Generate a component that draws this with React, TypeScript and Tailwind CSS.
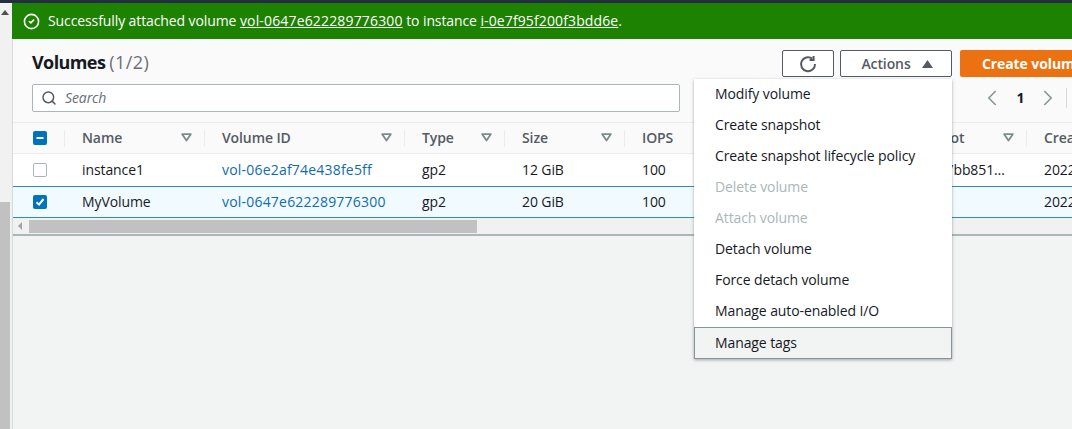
import { Search, CircleCheck, ChevronLeft, ChevronRight } from "lucide-react";

const cols = "grid grid-cols-[52px_140px_200px_100px_120px_100px_160px_142px_200px] w-[1214px]";

function Sort() {
  return (
    <svg width="11" height="9" viewBox="0 0 11 9" className="shrink-0 -mt-[2px]">
      <path d="M1.2 1.2h8.6L5.5 7.6z" fill="none" stroke="#7d8b8c" strokeWidth="1.8" strokeLinejoin="round" />
    </svg>
  );
}

function Head({ label, last }: { label: string; last?: boolean }) {
  return (
    <div className="flex items-center justify-between pl-[17px] pr-[13px] relative h-full">
      <span className="font-semibold text-[#545b64]">{label}</span>
      {!last && <Sort />}
      {!last && <span className="absolute right-0 top-[7px] h-[17px] w-px bg-[#eaeded]" />}
    </div>
  );
}

function Box({ kind }: { kind: "none" | "dash" | "check" }) {
  if (kind === "none") return <span className="block w-[14px] h-[14px] rounded-[2px] border border-[#aab7b8] bg-white" />;
  return (
    <span className="flex items-center justify-center w-[14px] h-[14px] rounded-[2px] bg-[#0073bb]">
      <svg width="10" height="10" viewBox="0 0 10 10">
        {kind === "dash" ? (
          <path d="M1.5 5h7" stroke="#fff" strokeWidth="2" fill="none" />
        ) : (
          <path d="M1.5 5.2 4 7.6 8.5 2" stroke="#fff" strokeWidth="2" fill="none" />
        )}
      </svg>
    </span>
  );
}

function Cell({ children, link }: { children?: React.ReactNode; link?: boolean }) {
  return (
    <div className={`pl-[17px] pr-[8px] whitespace-nowrap overflow-hidden ${link ? "text-[#0f6cad] tracking-[0.2px]" : "text-[#16191f]"}`}>{children}</div>
  );
}

const menu: [string, boolean?][] = [
  ["Modify volume"],
  ["Create snapshot"],
  ["Create snapshot lifecycle policy"],
  ["Delete volume", true],
  ["Attach volume", true],
  ["Detach volume"],
  ["Force detach volume"],
  ["Manage auto-enabled I/O"],
];

export default function App() {
  return (
    <div className="relative w-[1072px] h-[429px] overflow-hidden bg-[#f2f3f3] text-[14px] leading-5 tracking-[-0.1px] font-['Open_Sans','Noto_Sans',sans-serif]">
      <div className="h-[3px] bg-[#232f3e]" />
      <div className="flex h-[426px]">
        <div className="w-3 shrink-0 flex flex-col bg-[#f1f1f1]">
          <div className="h-[199px] pt-[7px] pl-[1px]">
            <svg width="8" height="5" viewBox="0 0 8 5"><path d="M0 5 4 0l4 5z" fill="#505050" /></svg>
          </div>
          <div className="flex-1 w-[10px] bg-[#c1c1c1]" />
        </div>
        <div className="flex-1 min-w-0 flex flex-col">
          <div className="h-[36px] shrink-0 bg-[#1d8102] text-white flex items-center pl-[11px] pr-4 gap-[8px] whitespace-nowrap">
            <CircleCheck size={17} strokeWidth={2.25} />
            <span>
              Successfully attached volume <u className="tracking-[0.16px]">vol-0647e622289776300</u> to instance <u className="tracking-[0.12px]">i-0e7f95f200f3bdd6e</u>.
            </span>
          </div>
          <div className="border-l border-[#d5dbdb] flex-1 flex flex-col overflow-hidden">
            <div className="bg-[#fafafa] pl-[19px] h-[83px] shrink-0">
              <div className="flex pt-[11px]">
                <div className="flex-1 text-[18px] leading-6 font-bold tracking-[-0.6px] text-[#16191f]">
                  Volumes <span className="font-normal tracking-[0.4px] text-[#687078]">(1/2)</span>
                </div>
                <div className="w-[290px] shrink-0 flex overflow-hidden">
                  <div className="w-[52px] h-[27px] shrink-0 border border-[#545b64] rounded-[2px] bg-white flex items-center justify-center">
                    <svg width="18" height="18" viewBox="0 0 18 18" fill="none" stroke="#545b64" strokeWidth="2">
                      <path d="M13.2 3.6A7 7 0 1 0 16 9" />
                      <path d="M14.6 1v4h-4" />
                    </svg>
                  </div>
                  <div className="ml-[6px] w-[112px] h-[27px] shrink-0 border border-[#545b64] rounded-[2px] bg-white flex items-center justify-center gap-[11px] pl-[2px] font-semibold text-[#545b64]">
                    Actions
                    <svg width="11" height="8" viewBox="0 0 11 8"><path d="M0 8 5.5 0 11 8z" fill="#545b64" /></svg>
                  </div>
                  <div className="ml-2 w-[130px] h-[27px] shrink-0 rounded-[2px] bg-[#ec7211] text-white font-bold pl-[22px] flex items-center whitespace-nowrap">
                    Create volume
                  </div>
                </div>
              </div>
              <div className="flex mt-[7px] items-center">
                <div className="w-[648px] h-[28px] shrink-0 border border-[#aab7b8] rounded-[2px] bg-white flex items-center pl-[8px] gap-[8px] text-[#687078] italic">
                  <Search size={16} strokeWidth={2.25} color="#545b64" />
                  Search
                </div>
                <div className="ml-[299px] flex items-center text-[#545b64]">
                  <ChevronLeft size={26} color="#879596" strokeWidth={1.5} />
                  <span className="font-bold text-[#16191f] w-[30px] text-center pl-[1px]">1</span>
                  <ChevronRight size={26} color="#879596" strokeWidth={1.5} />
                </div>
              </div>
            </div>
            <div className="overflow-hidden">
              <div className={`${cols} h-[32px] items-center bg-[#fafafa] border-y border-[#eaeded]`}>
                <div className="pl-[20px] relative h-full flex items-center">
                  <Box kind="dash" />
                  <span className="absolute right-0 top-[7px] h-[17px] w-px bg-[#eaeded]" />
                </div>
                {["Name", "Volume ID", "Type", "Size", "IOPS", "", "Snapshot"].map((h, i) => (
                  <Head key={i} label={h} />
                ))}
                <Head label="Created" last />
              </div>
              <div className={`${cols} h-[32px] items-center bg-white`}>
                <div className="pl-[20px]"><Box kind="none" /></div>
                <Cell>instance1</Cell>
                <Cell link>vol-06e2af74e438fe5ff</Cell>
                <Cell>gp2</Cell>
                <Cell>12 GiB</Cell>
                <Cell>100</Cell>
                <Cell />
                <Cell>snap-07bb851…</Cell>
                <Cell>2022/04/11 10:30</Cell>
              </div>
              <div className={`${cols} h-[32px] items-center bg-[#f1faff] border-y border-[#2b8fb3] box-border`}>
                <div className="pl-[20px]"><Box kind="check" /></div>
                <Cell>MyVolume</Cell>
                <Cell link>vol-0647e622289776300</Cell>
                <Cell>gp2</Cell>
                <Cell>20 GiB</Cell>
                <Cell>100</Cell>
                <Cell />
                <Cell />
                <Cell>2022/04/11 10:45</Cell>
              </div>
            </div>
            <div className="h-[18px] shrink-0 bg-[#f1f1f1] border-b-2 border-[#aab7b8] flex items-center">
              <svg width="16" height="8" viewBox="0 0 16 8" className="shrink-0"><path d="M9 0 5 4l4 4z" fill="#a3a3a3" /></svg>
              <div className="w-[448px] h-[13px] bg-[#c1c1c1]" />
            </div>
          </div>
        </div>
      </div>

      <div className="absolute left-[694px] top-[79px] w-[258px] bg-white shadow-[0_1px_3px_rgba(0,28,36,0.35)]">
        {menu.map(([label, off]) => (
          <div key={label} className={`h-[31px] flex items-center pl-[21px] pb-[1px] whitespace-nowrap ${off ? "text-[#aab7b8]" : "text-[#16191f]"}`}>
            {label}
          </div>
        ))}
        <div className="h-[32px] flex items-center pl-[20px] pb-[1px] bg-[#f2f3f3] border border-[#879596] text-[#16191f]">Manage tags</div>
      </div>

      <div className="absolute left-[1066px] top-[88px] h-[20px] w-px bg-[#d5dbdb]" />
    </div>
  );
}
